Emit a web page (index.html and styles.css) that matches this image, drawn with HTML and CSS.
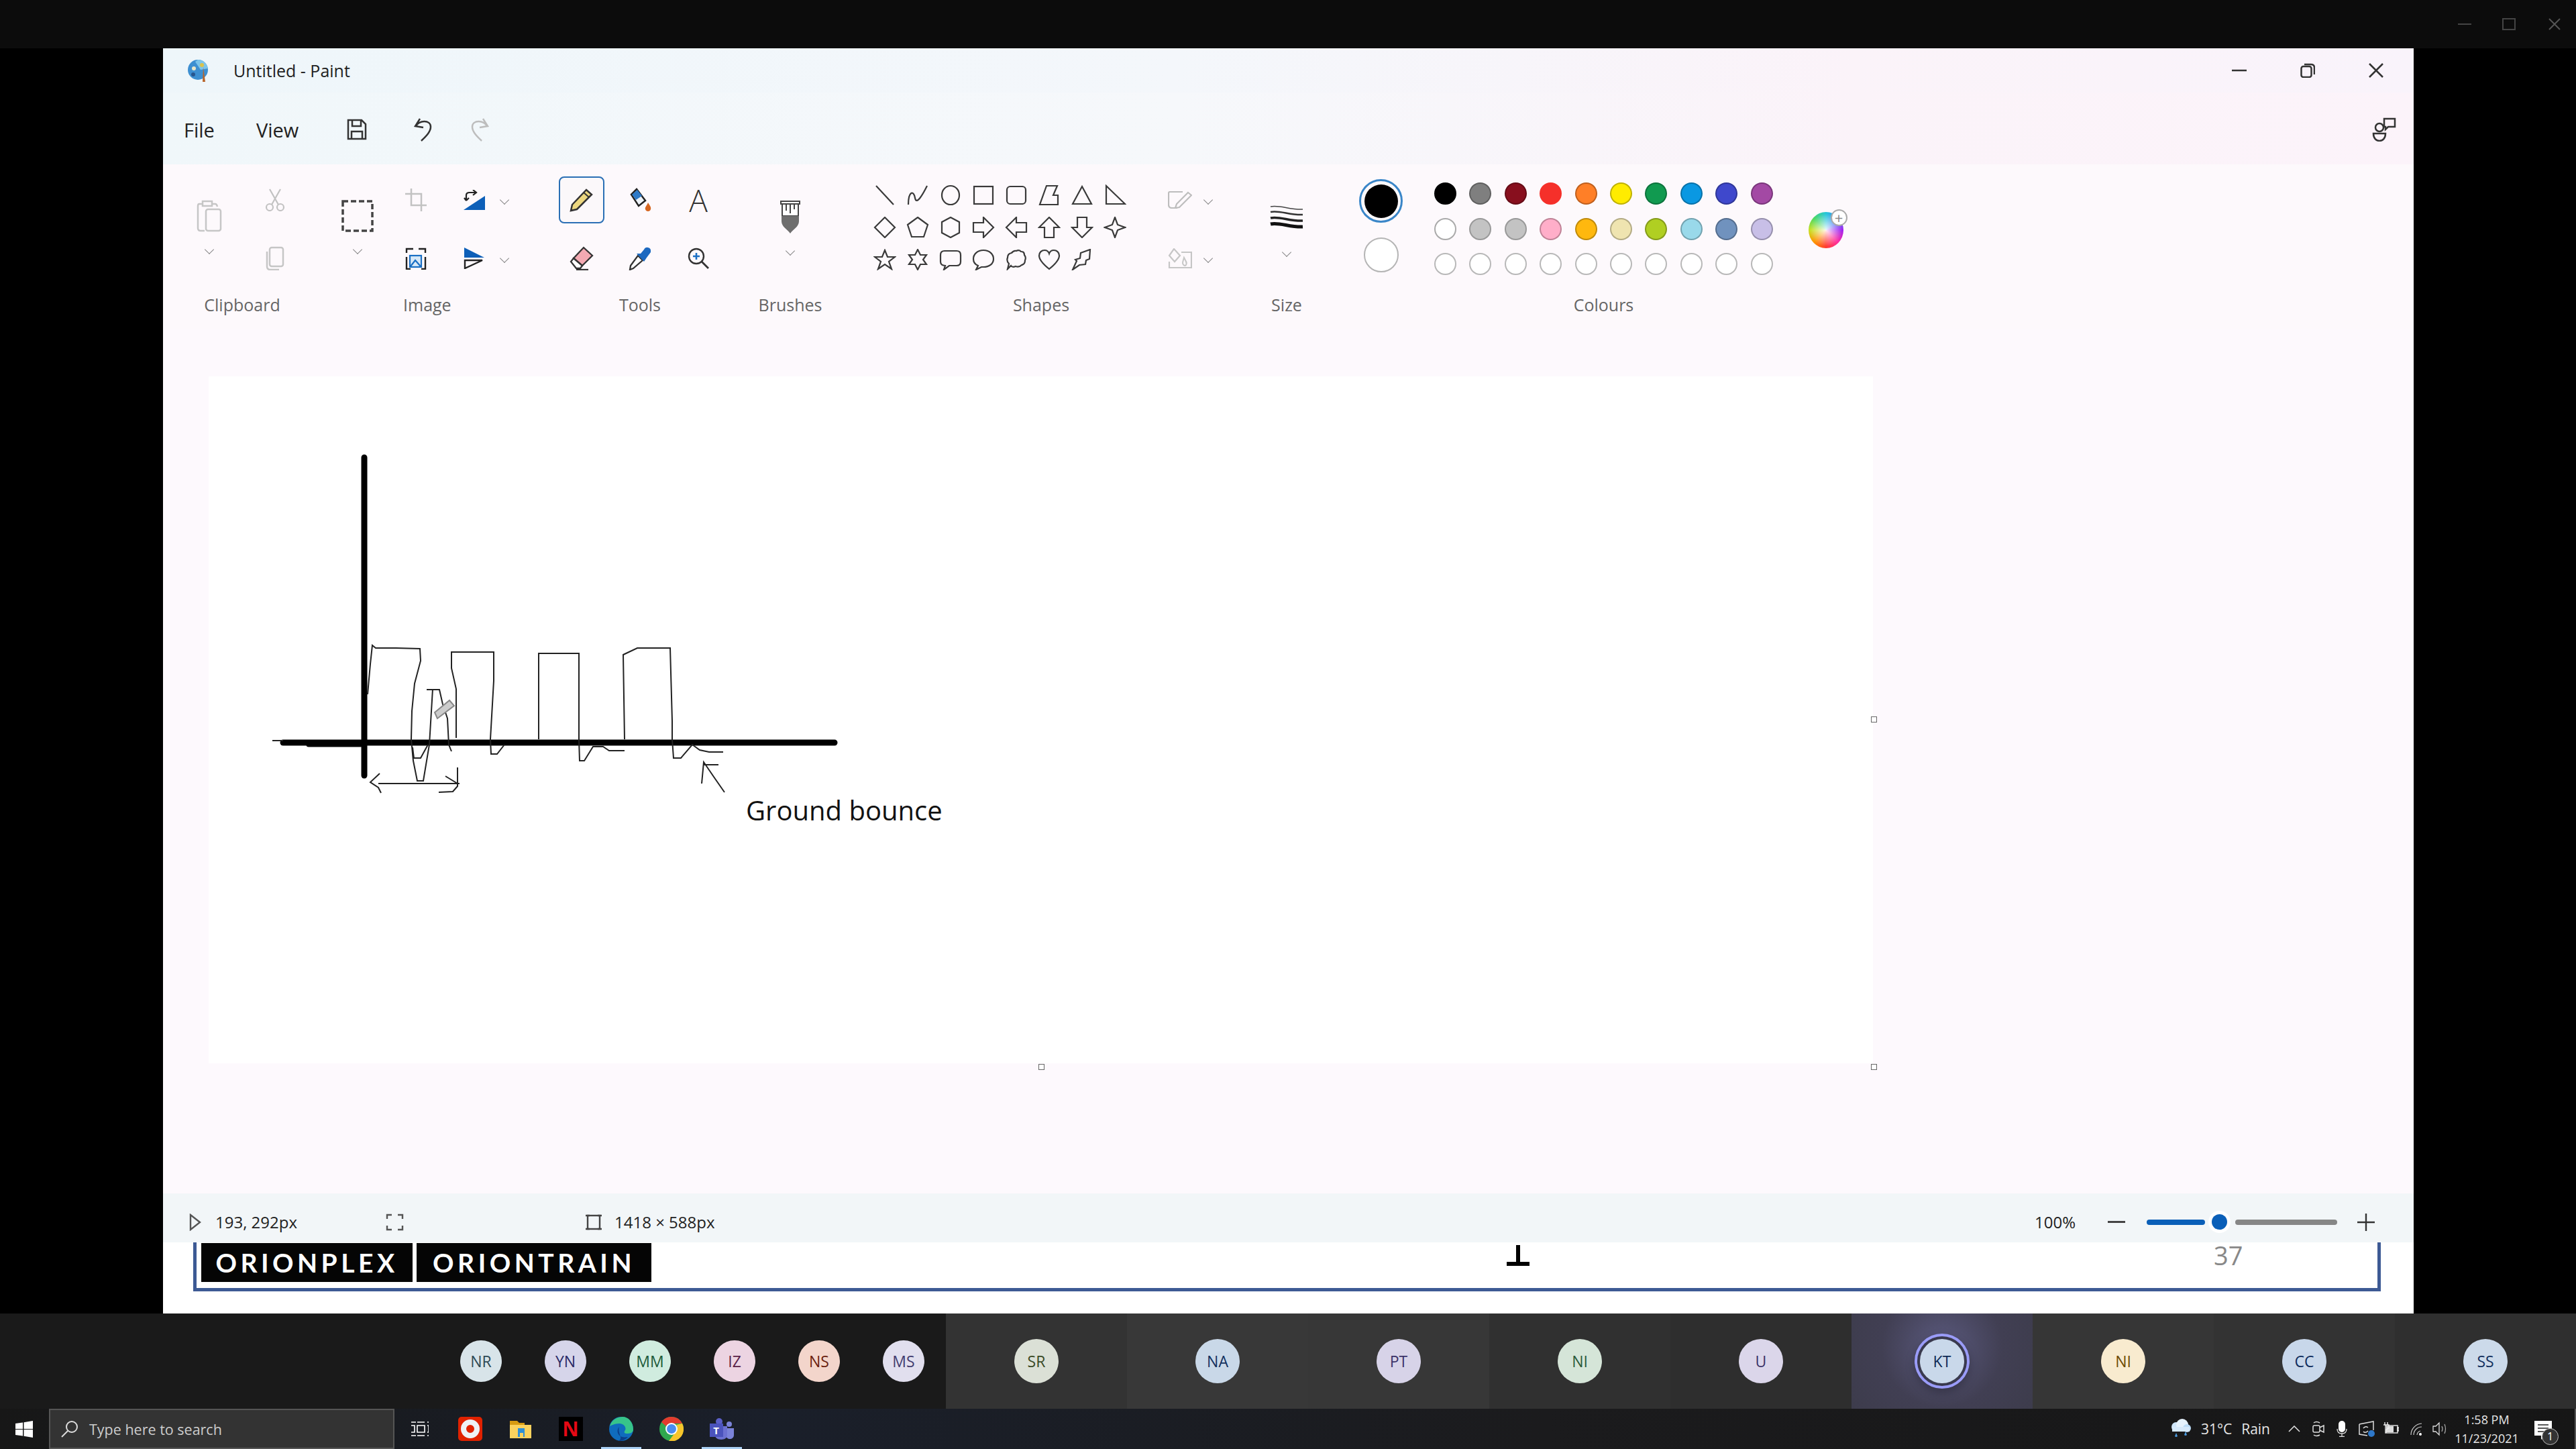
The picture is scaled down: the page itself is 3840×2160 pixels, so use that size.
FILE: index.html
```html
<!DOCTYPE html>
<html lang="en">
<head>
    <meta charset="UTF-8">
    <title>Untitled - Paint</title>
    <link rel="stylesheet" href="styles.css">
</head>
<body>
    <!-- Meeting window controls -->
    <div class="topbar">
        <span class="top-min"></span>
        <span class="top-max"></span>
        <svg class="top-close" width="20" height="20" viewBox="0 0 20 20"><path d="M2 2L18 18M18 2L2 18" stroke="#555" stroke-width="2"/></svg>
    </div>

    <div class="desktop">
        <div class="paint">
            <div class="titlebar">
                <svg class="app-icon" width="34" height="34" viewBox="0 0 34 34">
                    <circle cx="16" cy="16" r="15" fill="#3d8fd1"/>
                    <path d="M16 1A15 15 0 0 1 31 14L20 16L12 4z" fill="#7cc4ea"/>
                    <circle cx="10" cy="14" r="3" fill="#e9e6c8"/>
                    <circle cx="22" cy="9" r="3" fill="#d9c24a"/>
                    <circle cx="9" cy="23" r="3" fill="#27568f"/>
                    <path d="M24 12L27 34L23 34z" fill="#b8642a"/>
                </svg>
                <span class="title-text">Untitled - Paint</span>
                <div class="win-controls">
                    <svg width="22" height="4" viewBox="0 0 22 4"><path d="M0 2H22" stroke="#333" stroke-width="2.5"/></svg>
                    <svg width="22" height="22" viewBox="0 0 22 22"><rect x="1.5" y="5" width="15" height="16" rx="3" fill="none" stroke="#333" stroke-width="2.5"/><path d="M6 2H16Q21 2 21 7V17" fill="none" stroke="#333" stroke-width="2.5"/></svg>
                    <svg width="22" height="22" viewBox="0 0 22 22"><path d="M1 1L21 21M21 1L1 21" stroke="#333" stroke-width="2.5"/></svg>
                </div>
            </div>

            <div class="menubar">
                <span class="menu-file">File</span>
                <span class="menu-view">View</span>
                <svg class="menu-save" width="30" height="32" viewBox="0 0 30 32"><path d="M2 2H22L28 8V30H2zM8 2V11H21V2M7 30V19H23V30" fill="none" stroke="#333" stroke-width="2.5"/></svg>
                <svg class="menu-undo" width="30" height="36" viewBox="0 0 30 36"><path d="M5 13C9 4 27 3 27 14C27 22 19 29 13 35M11 2L4 13L16 15" fill="none" stroke="#333" stroke-width="2.5"/></svg>
                <svg class="menu-redo" width="30" height="36" viewBox="0 0 30 36"><path d="M25 13C21 4 3 3 3 14C3 22 11 29 17 35M19 2L26 13L14 15" fill="none" stroke="#bdbdbd" stroke-width="2.5"/></svg>
                <svg class="menu-share" width="36" height="36" viewBox="0 0 36 36">
                    <circle cx="11" cy="15" r="6" fill="none" stroke="#333" stroke-width="2.5"/>
                    <path d="M2 24H20C20 31 16 35 11 35C6 35 2 31 2 24z" fill="none" stroke="#333" stroke-width="2.5"/>
                    <path d="M18 2H34V14H24L20 18V14H18z" fill="none" stroke="#333" stroke-width="2.5"/>
                </svg>
            </div>

            <div class="ribbon">
                <!-- Clipboard -->
                <div class="group group-clipboard">
                    <div class="tools clipboard-tools">
                        <div class="tall-tool">
                            <svg width="38" height="48" viewBox="0 0 38 48"><path d="M8 6H4Q2 6 2 9V42Q2 46 6 46H12M24 6H28Q30 6 31 10M9 2H23V9H9z" fill="none" stroke="#c6c6c6" stroke-width="2.5"/><rect x="14" y="14" width="22" height="32" rx="3" fill="none" stroke="#c6c6c6" stroke-width="2.5"/></svg>
                            <span class="chev"></span>
                        </div>
                        <div class="tool">
                            <svg width="32" height="34" viewBox="0 0 32 34"><path d="M8 1L21 24M24 1L11 24" stroke="#c2c2c2" stroke-width="2.2"/><circle cx="8" cy="28" r="5" fill="none" stroke="#c2c2c2" stroke-width="2.2"/><circle cx="24" cy="28" r="5" fill="none" stroke="#c2c2c2" stroke-width="2.2"/></svg>
                        </div>
                        <div class="tool">
                            <svg width="28" height="36" viewBox="0 0 28 36"><rect x="6" y="2" width="20" height="28" rx="3" fill="none" stroke="#c6c6c6" stroke-width="2.5"/><path d="M2 8V30Q2 35 7 35H20" fill="none" stroke="#c6c6c6" stroke-width="2.5"/></svg>
                        </div>
                    </div>
                    <span class="group-label">Clipboard</span>
                </div>

                <!-- Image -->
                <div class="group group-image">
                    <div class="tools image-tools">
                        <div class="tall-tool select-tool">
                            <svg width="48" height="48" viewBox="0 0 48 48"><rect x="2" y="2" width="44" height="44" fill="none" stroke="#444" stroke-width="3.5" stroke-dasharray="8 4"/></svg>
                            <span class="chev"></span>
                        </div>
                        <div class="tool">
                            <svg width="32" height="34" viewBox="0 0 32 34"><path d="M9 0V25H32M0 8H24V34" fill="none" stroke="#c2c2c2" stroke-width="2.5"/></svg>
                        </div>
                        <div class="tool tool-split">
                            <svg width="32" height="30" viewBox="0 0 32 30"><path d="M0 30H32V9z" fill="#0d5fb8"/><path d="M4 15V8Q4 4 9 4H18M14 0L19 4L14 8M4 16L1 12M4 16L8 12" fill="none" stroke="#222" stroke-width="2.2"/></svg>
                            <span class="chev"></span>
                        </div>
                        <div class="tool">
                            <svg width="32" height="33" viewBox="0 0 32 33"><path d="M2 8V2H12M2 14V32H8M20 2H30V8M24 32H30V14" fill="none" stroke="#222" stroke-width="2.4"/><rect x="7" y="12" width="17" height="17" fill="#d8e8f7" stroke="#1a6fc4" stroke-width="2.2"/><path d="M8 28L15 19L23 28" fill="none" stroke="#1a6fc4" stroke-width="2.2"/></svg>
                        </div>
                        <div class="tool tool-split">
                            <svg width="32" height="32" viewBox="0 0 32 32"><path d="M1 0L31 15H1z" fill="#0d5fb8"/><path d="M2 19H28L2 31z" fill="none" stroke="#222" stroke-width="2.4"/></svg>
                            <span class="chev"></span>
                        </div>
                    </div>
                    <span class="group-label">Image</span>
                </div>

                <!-- Tools -->
                <div class="group group-tools">
                    <div class="tools tools-grid">
                        <div class="tool tool-active">
                            <svg width="36" height="36" viewBox="0 0 36 36"><path d="M25 3L33 10L11 32L2 34L4 25z" fill="#ecd77f" stroke="#333" stroke-width="2.5"/><path d="M21 7L29 14" stroke="#333" stroke-width="2"/></svg>
                        </div>
                        <div class="tool">
                            <svg width="36" height="36" viewBox="0 0 36 36"><path d="M5 10L13 2L26 19L16 27z" fill="#eef3f8" stroke="#222" stroke-width="2.5"/><path d="M6 10L14 3L21 12L12 18z" fill="#2e7ac8"/><path d="M30 22C33 27 35 29 34 32C33 36 27 36 26 32C25 29 28 27 30 22z" fill="#d6651f"/></svg>
                        </div>
                        <div class="tool tool-letter">A</div>
                        <div class="tool">
                            <svg width="36" height="36" viewBox="0 0 36 36"><path d="M21 2L34 14L19 29L6 18z" fill="#f3a9b2" stroke="#333" stroke-width="2.3"/><path d="M6 18L2 23L10 33H16L19 29z" fill="#fff" stroke="#333" stroke-width="2.3"/><path d="M10 35H28" stroke="#333" stroke-width="2.3"/></svg>
                        </div>
                        <div class="tool">
                            <svg width="36" height="36" viewBox="0 0 36 36"><path d="M15 14L22 21L8 33L3 35L4 29z" fill="#fff" stroke="#333" stroke-width="2.3"/><path d="M13 11L24 23L28 17L34 9Q35 3 30 2Q26 1 24 5L19 11z" fill="#1d69c0"/></svg>
                        </div>
                        <div class="tool">
                            <svg width="32" height="32" viewBox="0 0 32 32"><circle cx="13" cy="13" r="11" fill="none" stroke="#333" stroke-width="2.4"/><path d="M21 21L31 31" stroke="#333" stroke-width="2.8"/><path d="M13 8V18M8 13H18" stroke="#1a6fc4" stroke-width="2.6"/></svg>
                        </div>
                    </div>
                    <span class="group-label">Tools</span>
                </div>

                <!-- Brushes -->
                <div class="group group-brushes">
                    <div class="tools">
                        <div class="tall-tool">
                            <svg width="32" height="50" viewBox="0 0 32 50"><path d="M2 2H30V6H2zM4 6H28V24H4z" fill="#fff" stroke="#444" stroke-width="2"/><path d="M10 7V16M16 7V20M22 7V14" stroke="#444" stroke-width="2"/><path d="M3 24H29V32C29 40 20 44 16 50C12 44 3 40 3 32z" fill="#6e6e6e"/></svg>
                            <span class="chev"></span>
                        </div>
                    </div>
                    <span class="group-label">Brushes</span>
                </div>

                <!-- Shapes -->
                <div class="group group-shapes">
                    <div class="tools shapes-tools">
                        <div class="shapes-grid">
                            <svg class="shape" viewBox="0 0 32 32"><path d="M3 2L29 30"/></svg>
                            <svg class="shape" viewBox="0 0 32 32"><path d="M2 30C2 10 10 8 12 20C14 32 24 14 30 2"/></svg>
                            <svg class="shape" viewBox="0 0 32 32"><ellipse cx="16" cy="16" rx="13" ry="14"/></svg>
                            <svg class="shape" viewBox="0 0 32 32"><rect x="2" y="3" width="28" height="26"/></svg>
                            <svg class="shape" viewBox="0 0 32 32"><rect x="2" y="3" width="28" height="26" rx="5"/></svg>
                            <svg class="shape" viewBox="0 0 32 32"><path d="M12 2H28L22 16H29V30H2z"/></svg>
                            <svg class="shape" viewBox="0 0 32 32"><path d="M16 3L30 29H2z"/></svg>
                            <svg class="shape" viewBox="0 0 32 32"><path d="M3 2L31 29H3z"/></svg>
                            <svg class="shape" viewBox="0 0 32 32"><path d="M16 1L31 16L16 31L1 16z"/></svg>
                            <svg class="shape" viewBox="0 0 32 32"><path d="M16 1L31 12L25 30H7L1 12z"/></svg>
                            <svg class="shape" viewBox="0 0 32 32"><path d="M16 1L29 8V24L16 31L3 24V8z"/></svg>
                            <svg class="shape" viewBox="0 0 32 32"><path d="M1 9H16V1L31 16L16 31V23H1z"/></svg>
                            <svg class="shape" viewBox="0 0 32 32"><path d="M31 9H16V1L1 16L16 31V23H31z"/></svg>
                            <svg class="shape" viewBox="0 0 32 32"><path d="M9 31V16H1L16 1L31 16H23V31z"/></svg>
                            <svg class="shape" viewBox="0 0 32 32"><path d="M9 1V16H1L16 31L31 16H23V1z"/></svg>
                            <svg class="shape" viewBox="0 0 32 32"><path d="M16 1L20 12L31 16L20 20L16 31L12 20L1 16L12 12z"/></svg>
                            <svg class="shape" viewBox="0 0 32 32"><path d="M16 2L20 12L31 12L22 19L26 30L16 23L6 30L10 19L1 12L12 12z"/></svg>
                            <svg class="shape" viewBox="0 0 32 32"><path d="M16 1L20 9L29 9L24 16L29 23L20 23L16 31L12 23L3 23L8 16L3 9L12 9z"/></svg>
                            <svg class="shape" viewBox="0 0 32 32"><path d="M7 3H25Q31 3 31 9V19Q31 25 25 25H14L6 31L8 25Q1 25 1 19V9Q1 3 7 3z"/></svg>
                            <svg class="shape" viewBox="0 0 32 32"><path d="M16 2C25 2 31 8 31 15C31 22 25 27 16 27H13L5 31L8 25C3 23 1 19 1 15C1 8 7 2 16 2z"/></svg>
                            <svg class="shape" viewBox="0 0 32 32"><path d="M16 3Q20 1 23 4Q28 4 28 9Q31 13 29 17Q29 23 24 24Q20 28 15 26Q10 28 8 25L3 30L5 22Q1 18 3 13Q3 7 9 6Q12 2 16 3z"/></svg>
                            <svg class="shape" viewBox="0 0 32 32"><path d="M16 30C6 22 1 16 1 10C1 5 5 2 9 2C12 2 15 4 16 7C17 4 20 2 23 2C27 2 31 5 31 10C31 16 26 22 16 30z"/></svg>
                            <svg class="shape" viewBox="0 0 32 32"><path d="M14 6L28 1L27 15L22 17L21 23L12 24L2 31L8 18L6 16L13 14z"/></svg>
                        </div>
                        <div class="shape-styles">
                            <div class="tool tool-split">
                                <svg width="36" height="26" viewBox="0 0 36 26"><path d="M22 1H3Q1 1 1 3V20Q1 25 6 25H14" fill="none" stroke="#bdbdbd" stroke-width="2.2"/><path d="M30 2L35 6L17 24L11 25L13 19z" fill="none" stroke="#bdbdbd" stroke-width="2.2"/></svg>
                                <span class="chev"></span>
                            </div>
                            <div class="tool tool-split">
                                <svg width="36" height="30" viewBox="0 0 36 30"><path d="M20 6H35V29H2V20" fill="none" stroke="#c6c6c6" stroke-width="2.2"/><path d="M9 1L18 11L10 20L2 11z" fill="none" stroke="#c6c6c6" stroke-width="2.2"/><path d="M24 14C27 20 29 22 27 25C25 27 22 25 22 22C22 20 23 18 24 14z" fill="none" stroke="#c6c6c6" stroke-width="2"/></svg>
                                <span class="chev"></span>
                            </div>
                        </div>
                    </div>
                    <span class="group-label">Shapes</span>
                </div>

                <!-- Size -->
                <div class="group group-size">
                    <div class="tools">
                        <div class="tall-tool size-tool">
                            <svg width="50" height="38" viewBox="0 0 50 38"><path d="M1 3C14 0 30 8 49 7" fill="none" stroke="#444" stroke-width="1.5"/><path d="M1 11C14 8 30 16 49 15" fill="none" stroke="#333" stroke-width="2.5"/><path d="M1 20C14 17 30 25 49 24" fill="none" stroke="#222" stroke-width="3.5"/><path d="M1 29C14 26 30 34 49 33" fill="none" stroke="#111" stroke-width="5"/></svg>
                            <span class="chev"></span>
                        </div>
                    </div>
                    <span class="group-label">Size</span>
                </div>

                <!-- Colours -->
                <div class="group group-colours">
                    <div class="tools colours-tools">
                        <div class="active-colours">
                            <div class="current-colour"><span></span></div>
                            <div class="second-colour"></div>
                        </div>
                        <div class="palette">
                            <span class="swatch c-black"></span>
                            <span class="swatch c-gray"></span>
                            <span class="swatch c-maroon"></span>
                            <span class="swatch c-red"></span>
                            <span class="swatch c-orange"></span>
                            <span class="swatch c-yellow"></span>
                            <span class="swatch c-green"></span>
                            <span class="swatch c-blue"></span>
                            <span class="swatch c-indigo"></span>
                            <span class="swatch c-purple"></span>
                            <span class="swatch c-white"></span>
                            <span class="swatch c-silver"></span>
                            <span class="swatch c-silver"></span>
                            <span class="swatch c-pink"></span>
                            <span class="swatch c-gold"></span>
                            <span class="swatch c-cream"></span>
                            <span class="swatch c-lime"></span>
                            <span class="swatch c-sky"></span>
                            <span class="swatch c-steel"></span>
                            <span class="swatch c-lavender"></span>
                            <span class="swatch empty"></span>
                            <span class="swatch empty"></span>
                            <span class="swatch empty"></span>
                            <span class="swatch empty"></span>
                            <span class="swatch empty"></span>
                            <span class="swatch empty"></span>
                            <span class="swatch empty"></span>
                            <span class="swatch empty"></span>
                            <span class="swatch empty"></span>
                            <span class="swatch empty"></span>
                        </div>
                        <div class="colour-wheel">
                            <span class="wheel-plus">+</span>
                        </div>
                    </div>
                    <span class="group-label">Colours</span>
                </div>
            </div>

            <div class="workspace">
                <div class="canvas">
                    <svg class="drawing" width="2481" height="1024" viewBox="311 561 2481 1024">
                        <g class="thick">
                            <path d="M543 682V1156"/>
                            <path d="M422 1107H1244"/>
                            <path d="M460 1110H538" stroke-width="7"/>
                        </g>
                        <g class="thin">
                            <path d="M406 1104H422"/>
                            <path d="M548 1035L552 990L555 962L560 966H590L626 967L627 985L618 1019L614 1060L613 1102L616 1134L622 1164H631L640 1110L645 1027"/>
                            <path d="M636 1028H655L660 1050L667 1071L669 1110L673 1120"/>
                            <path d="M615 1114L617 1130H627L638 1110"/>
                            <path d="M680 1100V1027L673 996V972H736V1015L731 1102L732 1124H741L752 1110"/>
                            <path d="M803 1102V974H863V1102L864 1134H871L884 1113H899L908 1119H931"/>
                            <path d="M931 1102L929 976L950 966H999L1002 1075V1102L1004 1130H1015L1032 1110L1043 1118L1057 1121H1078"/>
                            <path d="M1046 1168L1049 1136L1064 1158L1080 1181M1049 1140H1071"/>
                            <path d="M566 1153L552 1166L564 1174L568 1182"/>
                            <path d="M564 1168H685M682 1144V1172L675 1180L654 1181M664 1157L682 1168"/>
                        </g>
                        <path class="pencil-cursor" d="M652 1071L648 1062L670 1044L677 1052z"/>
                        <text class="drawing-text" x="1112" y="1223">Ground bounce</text>
                    </svg>
                    <span class="handle handle-right"></span>
                    <span class="handle handle-bottom"></span>
                    <span class="handle handle-corner"></span>
                </div>
            </div>

            <div class="statusbar">
                <svg class="status-pointer" width="18" height="26" viewBox="0 0 18 26"><path d="M2 2L16 13L2 24z" fill="none" stroke="#555" stroke-width="2.4"/></svg>
                <span class="status-pos">193, 292px</span>
                <svg class="status-select" width="27" height="26" viewBox="0 0 27 26"><path d="M2 8V2H9M18 2H25V8M2 18V24H9M18 24H25V18" fill="none" stroke="#555" stroke-width="2.4"/></svg>
                <svg class="status-canvas" width="24" height="26" viewBox="0 0 24 26"><rect x="3" y="3" width="18" height="20" fill="none" stroke="#444" stroke-width="2.4"/><path d="M0 3H6M18 3H24M0 23H6M18 23H24" stroke="#444" stroke-width="2.4"/></svg>
                <span class="status-size">1418 × 588px</span>
                <span class="status-zoom">100%</span>
                <span class="zoom-minus"></span>
                <div class="zoom-slider">
                    <span class="zoom-fill"></span>
                    <span class="zoom-thumb"></span>
                    <span class="zoom-track"></span>
                </div>
                <svg class="zoom-plus" width="26" height="26" viewBox="0 0 26 26"><path d="M0 13H26M13 0V26" stroke="#333" stroke-width="2.4"/></svg>
            </div>

            <!-- Bottom of the slide showing behind the Paint window -->
            <div class="slide">
                <div class="slide-frame">
                    <div class="logo">
                        <span class="logo-box logo-plex">ORIONPLEX</span>
                        <span class="logo-box logo-train">ORIONTRAIN</span>
                    </div>
                    <span class="slide-mark"></span>
                    <span class="slide-number">37</span>
                </div>
            </div>
        </div>
    </div>

    <!-- Participants -->
    <div class="participants">
        <div class="people-row">
            <span class="avatar small a-nr">NR</span>
            <span class="avatar small a-yn">YN</span>
            <span class="avatar small a-mm">MM</span>
            <span class="avatar small a-iz">IZ</span>
            <span class="avatar small a-ns">NS</span>
            <span class="avatar small a-ms">MS</span>
        </div>
        <div class="tile tile-1"><span class="avatar a-sr">SR</span></div>
        <div class="tile tile-2"><span class="avatar a-na">NA</span></div>
        <div class="tile tile-3"><span class="avatar a-pt">PT</span></div>
        <div class="tile tile-4"><span class="avatar a-ni">NI</span></div>
        <div class="tile tile-5"><span class="avatar a-u">U</span></div>
        <div class="tile tile-speaking"><span class="avatar a-kt">KT</span></div>
        <div class="tile tile-7"><span class="avatar a-ni2">NI</span></div>
        <div class="tile tile-8"><span class="avatar a-cc">CC</span></div>
        <div class="tile tile-9"><span class="avatar a-ss">SS</span></div>
    </div>

    <!-- Windows taskbar -->
    <div class="taskbar">
        <div class="start">
            <svg width="26" height="25" viewBox="0 0 26 25"><path d="M0 4L11 2.4V12H0zM12.500 2.200L26 0V12H12.500zM0 13H11V22.600L0 21zM12.500 13H26V25L12.500 22.800z" fill="#fff"/></svg>
        </div>
        <div class="search">
            <svg width="26" height="26" viewBox="0 0 26 26"><circle cx="16" cy="10" r="8" fill="none" stroke="#ddd" stroke-width="2"/><path d="M10 16L1 25" stroke="#ddd" stroke-width="2"/></svg>
            <span>Type here to search</span>
        </div>
        <div class="task-item">
            <svg width="26" height="24" viewBox="0 0 26 24"><path d="M0 2H7M0 22H7M0 7H5V17H0M9 7H20V17H9zM9 2H20M9 22H20M24 2H26M24 7H26V17H24M24 22H26" fill="none" stroke="#fff" stroke-width="1.6"/></svg>
        </div>
        <div class="task-item">
            <svg width="36" height="36" viewBox="0 0 36 36"><rect width="36" height="36" rx="5" fill="#e02200"/><circle cx="18" cy="18" r="10" fill="none" stroke="#eef2f6" stroke-width="8"/></svg>
        </div>
        <div class="task-item">
            <svg width="32" height="28" viewBox="0 0 32 28"><path d="M0 2H11L14 5H22V10H0z" fill="#d79b12"/><path d="M0 8H32V28H0z" fill="#fbd25e"/><path d="M12 13H22V26H12z" fill="#2f8fd6"/><path d="M15 20H20V26H15z" fill="#fbd25e"/></svg>
        </div>
        <div class="task-item"><span class="netflix">N</span></div>
        <div class="task-item running">
            <svg width="36" height="36" viewBox="0 0 36 36">
                <circle cx="18" cy="18" r="18" fill="#0f6cbd"/>
                <path d="M1 14C4 3 14 0 20 0C29 0 36 8 36 19C36 24 31 25 26 25C22 25 22 22 24 20C26 16 22 10 15 10C8 10 3 13 1 14z" fill="#37c48a"/>
                <path d="M15 15C10 20 12 33 28 30C24 35 18 36 14 36C22 32 12 25 15 15z" fill="#0b3f8a"/>
            </svg>
        </div>
        <div class="task-item">
            <svg width="36" height="36" viewBox="0 0 36 36">
                <circle cx="18" cy="18" r="18" fill="#2fa84f"/>
                <path d="M18 0A18 18 0 0 1 34 10H18A8 8 0 0 0 10 14L3 8A18 18 0 0 1 18 0z" fill="#e33b2e"/>
                <path d="M34 10A18 18 0 0 1 14 36L23 24A8 8 0 0 0 25 12z" fill="#f7c52b"/>
                <circle cx="18" cy="18" r="9" fill="#fff"/>
                <circle cx="18" cy="18" r="7" fill="#4a8cf0"/>
            </svg>
        </div>
        <div class="task-item running">
            <div class="teams">
                <svg class="teams-people" width="36" height="32" viewBox="0 0 36 32"><circle cx="14" cy="5" r="5" fill="#5b5fc7"/><circle cx="29" cy="9" r="4" fill="#7b83d9"/><path d="M24 15H36V25C36 29 33 31 30 31C27 31 24 29 24 25z" fill="#7b83d9"/><path d="M8 12H26V26C26 29 22 32 17 32C12 32 8 29 8 26z" fill="#6c71d1"/></svg>
                <span class="teams-t">T</span>
            </div>
        </div>

        <div class="tray">
            <svg class="tray-cloud" width="32" height="30" viewBox="0 0 32 30"><circle cx="10" cy="12" r="7" fill="#cfe6fb"/><circle cx="19" cy="9" r="9" fill="#e6f2fd"/><circle cx="26" cy="14" r="6" fill="#bcdcf7"/><path d="M4 12H30V19H4z" fill="#d6e9fb"/><path d="M10 21L12 26A2.500 2.500 0 0 1 8 26zM24 19L26 24A2.500 2.500 0 0 1 22 24z" fill="#4a9be0"/></svg>
            <span class="weather-temp">31°C</span>
            <span class="weather-text">Rain</span>
            <svg class="tray-chevron" width="18" height="10" viewBox="0 0 18 10"><path d="M1 9L9 1L17 9" fill="none" stroke="#ddd" stroke-width="1.6"/></svg>
            <svg class="tray-icon" width="20" height="24" viewBox="0 0 20 24"><rect x="2" y="7" width="10" height="10" rx="2" fill="none" stroke="#ddd" stroke-width="1.5"/><path d="M12 10L18 7V17L12 14M3 3Q7 0 12 3M3 21Q7 24 12 21" fill="none" stroke="#ddd" stroke-width="1.500"/></svg>
            <svg class="tray-icon" width="16" height="24" viewBox="0 0 16 24"><rect x="3" y="0" width="10" height="17" rx="5" fill="#fff"/><path d="M1 12Q1 19 8 19Q15 19 15 12M8 19V23M4 23.500H12" fill="none" stroke="#ddd" stroke-width="1.3"/></svg>
            <svg class="tray-icon" width="24" height="24" viewBox="0 0 24 24"><path d="M1 5L22 1V14M1 5V20L13 22" fill="none" stroke="#ddd" stroke-width="1.500"/><path d="M7 11Q10 7 14 10M7 16Q10 19 14 15" fill="none" stroke="#ddd" stroke-width="1.500"/><circle cx="19" cy="19" r="5" fill="#2e78c9"/></svg>
            <svg class="tray-battery" width="24" height="20" viewBox="0 0 24 20"><rect x="4" y="5" width="18" height="11" fill="none" stroke="#ddd" stroke-width="1.500"/><rect x="5" y="6" width="11" height="9" fill="#ddd"/><path d="M22 8H24V13H22zM3 0V4M7 0V4M1 4H9V9L5 11V16" fill="none" stroke="#eee" stroke-width="1.400"/></svg>
            <svg class="tray-icon" width="18" height="20" viewBox="0 0 18 20"><path d="M1 19A17 17 0 0 1 17 2M5 19A12 12 0 0 1 17 7M10 19A7 7 0 0 1 15 13" fill="none" stroke="#ccc" stroke-width="1.200"/><circle cx="15" cy="18" r="2" fill="#fff"/></svg>
            <svg class="tray-speaker" width="22" height="22" viewBox="0 0 22 22"><path d="M1 7H5L10 2V20L5 15H1z" fill="none" stroke="#ddd" stroke-width="1.300"/><path d="M14 7Q16 11 14 15M18 4Q21 11 18 18" fill="none" stroke="#aaa" stroke-width="1.200"/></svg>
            <div class="clock">
                <span>1:58 PM</span>
                <span>11/23/2021</span>
            </div>
            <div class="notify">
                <svg width="26" height="28" viewBox="0 0 26 28"><path d="M0 0H26V22H16L10 28V22H0z" fill="#fff"/><path d="M5 6H21M5 11H21M5 16H21" stroke="#222" stroke-width="1.500"/></svg>
                <span class="notify-count">1</span>
            </div>
        </div>
    </div>
</body>
</html>
```

FILE: styles.css
```css
* {
    margin: 0;
    padding: 0;
    box-sizing: border-box;
    font-family: "Open Sans", "Noto Sans", sans-serif;
}

body {
    width: 3840px;
    height: 2160px;
    background-color: #000;
    display: flex;
    flex-direction: column;
    overflow: hidden;
}

svg {
    display: block;
    flex-shrink: 0;
}

/* Meeting bar */
.topbar {
    height: 72px;
    background-color: #0c0c0c;
    display: flex;
    align-items: center;
    justify-content: flex-end;
    padding-right: 22px;
    flex-shrink: 0;
}

.top-min {
    width: 20px;
    height: 2px;
    background-color: #444;
}

.top-max {
    width: 20px;
    height: 18px;
    border: 2px solid #444;
    margin: 0 48px 0 46px;
}

/* Paint window */
.desktop {
    height: 1886px;
    padding-left: 243px;
    padding-right: 242px;
    flex-shrink: 0;
}

.paint {
    height: 100%;
    display: flex;
    flex-direction: column;
    background-color: #fdf9fc;
}

.titlebar {
    height: 66px;
    display: flex;
    align-items: center;
    padding-left: 36px;
    padding-right: 45px;
    background: linear-gradient(95deg, #eef6fa 0%, #f4f7fb 45%, #fbf3f9 75%, #f9f3fb 100%);
}

.title-text {
    margin-left: 35px;
    font-size: 25px;
    color: #222;
}

.win-controls {
    margin-left: auto;
    display: flex;
    align-items: center;
    gap: 80px;
}

.menubar {
    height: 107px;
    display: flex;
    align-items: center;
    padding-left: 31px;
    padding-top: 3px;
    color: #222;
    font-size: 29px;
    background: linear-gradient(95deg, #f0f7fa 0%, #f6f8fb 45%, #fbf3f9 75%, #fcf3fa 100%);
}

.menu-view {
    margin-left: 62px;
}

.menu-save {
    margin-left: 72px;
}

.menu-undo {
    margin-left: 68px;
}

.menu-redo {
    margin-left: 56px;
}

.menu-share {
    margin-left: auto;
    margin-right: 26px;
}

/* Ribbon */
.ribbon {
    height: 245px;
    display: flex;
    padding-left: 37px;
    padding-top: 18px;
    background-color: #fdf9fc;
    flex-shrink: 0;
}

.group {
    display: flex;
    flex-direction: column;
}

.tools {
    height: 157px;
}

.group-label {
    margin-top: 17px;
    font-size: 25px;
    line-height: 34px;
    color: #666;
    text-align: center;
}

.tool {
    display: flex;
    align-items: center;
    justify-content: center;
}

.tall-tool {
    display: flex;
    flex-direction: column;
    align-items: center;
    padding-top: 35px;
    gap: 21px;
}

.chev {
    width: 10px;
    height: 10px;
    border-right: 1.500px solid #888;
    border-bottom: 1.500px solid #888;
    transform: rotate(45deg);
    flex-shrink: 0;
}

.group-clipboard {
    width: 162px;
}

.clipboard-tools {
    display: grid;
    grid-template-columns: 64px 64px;
    grid-template-rows: 70px 70px;
    column-gap: 34px;
    row-gap: 17px;
}

.clipboard-tools .tall-tool {
    grid-row: span 2;
}

.group-image {
    width: 190px;
    margin-left: 144px;
}

.group-image .group-label {
    text-align: left;
    margin-left: 15px;
}

.image-tools {
    display: grid;
    grid-template-columns: 77px 68px 122px;
    grid-template-rows: 70px 70px;
    row-gap: 17px;
    margin-left: -77px;
    width: 267px;
}

.select-tool {
    grid-row: span 2;
    padding-right: 29px;
}

.tool-split {
    justify-content: flex-start;
    padding-left: 20px;
    gap: 19px;
}

.image-tools .tool-split {
    padding-left: 37px;
    gap: 24px;
}

.group-tools {
    width: 242px;
    margin-left: 57px;
}

.tools-grid {
    display: grid;
    grid-template-columns: repeat(3, 68px);
    grid-template-rows: 70px 70px;
    column-gap: 19px;
    row-gap: 17px;
}

.tool-active {
    border: 2px solid #2a6fb5;
    border-radius: 8px;
    background-color: #fbf8fa;
}

.tool-letter {
    font-size: 46px;
    font-weight: 300;
    color: #333;
}

.group-brushes {
    width: 100px;
    margin-left: 53px;
}

/* Shapes */
.group-shapes {
    width: 506px;
    margin-left: 71px;
}

.shapes-tools {
    display: flex;
}

.shapes-grid {
    display: grid;
    grid-template-columns: repeat(8, 40px);
    grid-auto-rows: 34px;
    column-gap: 9px;
    row-gap: 14px;
    padding-top: 12px;
}

.shape {
    width: 34px;
    height: 32px;
    justify-self: center;
    fill: none;
    stroke: #3a3a3a;
    stroke-width: 2.2;
}

.shape-styles {
    margin-left: 39px;
    display: grid;
    grid-template-rows: 70px 70px;
    row-gap: 17px;
    height: 157px;
}

.group-size {
    width: 80px;
    margin-left: 73px;
}

.size-tool {
    padding-top: 42px;
    gap: 28px;
}

/* Colours */
.group-colours {
    width: 729px;
    margin-left: 68px;
}

.colours-tools {
    display: flex;
}

.active-colours {
    width: 65px;
    padding-top: 4px;
}

.current-colour {
    width: 65px;
    height: 65px;
    border: 3px solid #3a86c8;
    border-radius: 50%;
    display: flex;
    align-items: center;
    justify-content: center;
}

.current-colour span {
    width: 50px;
    height: 50px;
    border-radius: 50%;
    background-color: #000;
}

.second-colour {
    width: 52px;
    height: 52px;
    margin: 22px auto 0;
    border: 2px solid #b5b5b5;
    border-radius: 50%;
    background-color: #fff;
}

.palette {
    margin-left: 47px;
    padding-top: 9px;
    display: grid;
    grid-template-columns: repeat(10, 33px);
    grid-auto-rows: 33px;
    column-gap: 19.400px;
    row-gap: 19.500px;
}

.swatch {
    width: 33px;
    height: 33px;
    border-radius: 50%;
    border: 2px solid rgba(0, 0, 0, 0.25);
}

.empty {
    background-color: #fff;
    border-color: #b8b8b8;
}

.c-black { background-color: #000; border-color: #000; }
.c-gray { background-color: #7f7f7f; }
.c-maroon { background-color: #880f1e; }
.c-red { background-color: #f5302a; border-color: #f5302a; }
.c-orange { background-color: #ff7f27; }
.c-yellow { background-color: #ffec00; }
.c-green { background-color: #119a50; }
.c-blue { background-color: #0a98e2; }
.c-indigo { background-color: #3f48cc; }
.c-purple { background-color: #a349a4; }
.c-white { background-color: #fff; border-color: #aaa; }
.c-silver { background-color: #c3c3c3; border-color: #999; }
.c-pink { background-color: #ffaec9; }
.c-gold { background-color: #ffb80e; }
.c-cream { background-color: #efe4b0; }
.c-lime { background-color: #b0cf22; }
.c-sky { background-color: #99d9ea; }
.c-steel { background-color: #7092be; }
.c-lavender { background-color: #c8bfe7; }

.colour-wheel {
    position: relative;
    width: 52px;
    height: 54px;
    margin-left: 53px;
    margin-top: 53px;
    border-radius: 50%;
    background: radial-gradient(circle, rgba(255, 255, 255, 0.9) 0%, rgba(255, 255, 255, 0) 65%),
        conic-gradient(#26c6da, #4287f5, #a020f0, #ff2fa0, #ff3b30, #ff9500, #c8e020, #4cd964, #26c6da);
}

.wheel-plus {
    position: absolute;
    top: -4px;
    right: -6px;
    width: 25px;
    height: 25px;
    border-radius: 50%;
    border: 2px solid #aaa;
    background-color: #fff;
    color: #888;
    font-size: 22px;
    line-height: 20px;
    text-align: center;
}

/* Canvas area */
.workspace {
    flex: 1;
    padding-left: 68px;
    padding-top: 71px;
    background-color: #fdf9fd;
}

.canvas {
    position: relative;
    width: 2481px;
    height: 1024px;
    background-color: #fff;
}

.thick {
    fill: none;
    stroke: #000;
    stroke-width: 9;
    stroke-linecap: round;
}

.thin {
    fill: none;
    stroke: #222;
    stroke-width: 2;
}

.pencil-cursor {
    fill: #ccc;
    stroke: #888;
    stroke-width: 2;
}

.drawing-text {
    font-size: 40px;
    fill: #111;
}

.handle {
    position: absolute;
    width: 9px;
    height: 9px;
    background-color: #fff;
    border: 1.500px solid #666;
}

.handle-right {
    right: -6px;
    top: 507px;
}

.handle-bottom {
    left: 1237px;
    bottom: -10px;
}

.handle-corner {
    right: -6px;
    bottom: -10px;
}

/* Status bar */
.statusbar {
    height: 73px;
    display: flex;
    align-items: center;
    padding-left: 39px;
    padding-top: 12px;
    font-size: 24px;
    color: #222;
    background-color: #f2f6f8;
    flex-shrink: 0;
}

.status-pos {
    margin-left: 21px;
    width: 129px;
}

.status-select {
    margin-left: 125px;
}

.status-canvas {
    margin-left: 271px;
}

.status-size {
    margin-left: 19px;
    width: 152px;
    white-space: nowrap;
}

.status-zoom {
    margin-left: 1965px;
    width: 61px;
}

.zoom-minus {
    width: 26px;
    height: 2.500px;
    margin-left: 48px;
    background-color: #444;
}

.zoom-slider {
    display: flex;
    align-items: center;
    margin-left: 32px;
}

.zoom-fill {
    width: 87px;
    height: 8px;
    border-radius: 4px;
    background-color: #0a5fb8;
}

.zoom-thumb {
    width: 23px;
    height: 23px;
    margin-left: 10px;
    margin-right: 12px;
    border-radius: 50%;
    background-color: #0a5fb8;
    box-shadow: 0 0 0 5px #fff;
}

.zoom-track {
    width: 152px;
    height: 8px;
    border-radius: 4px;
    background-color: #868686;
}

.zoom-plus {
    margin-left: 30px;
}

/* Slide behind the window */
.slide {
    height: 106px;
    background-color: #fff;
    padding-left: 45px;
    padding-right: 49px;
    flex-shrink: 0;
}

.slide-frame {
    height: 73px;
    display: flex;
    align-items: flex-start;
    border-left: 5px solid #3d5a94;
    border-right: 5px solid #3d5a94;
    border-bottom: 5px solid #3d5a94;
    padding-left: 7px;
}

.logo {
    display: flex;
    gap: 6px;
    padding-top: 1px;
}

.logo-box {
    height: 58px;
    background-color: #050505;
    color: #fff;
    font-family: "Lato", sans-serif;
    font-size: 39px;
    font-weight: 700;
    line-height: 58px;
    letter-spacing: 5.500px;
    text-align: center;
}

.logo-plex {
    width: 315px;
}

.logo-train {
    width: 350px;
}

.slide-mark {
    position: relative;
    width: 34px;
    height: 35px;
    margin-left: 1275px;
}

.slide-mark::before {
    content: "";
    position: absolute;
    left: 14px;
    top: 4px;
    width: 6px;
    height: 28px;
    background-color: #000;
}

.slide-mark::after {
    content: "";
    position: absolute;
    left: 0;
    top: 29px;
    width: 34px;
    height: 6px;
    background-color: #000;
}

.slide-number {
    margin-left: 1020px;
    font-size: 38px;
    line-height: 38px;
    color: #888;
}

/* Participants strip */
.participants {
    height: 142px;
    display: flex;
    flex-shrink: 0;
}

.people-row {
    width: 1410px;
    display: flex;
    align-items: center;
    gap: 64px;
    padding-left: 686px;
    background-color: #1a1a1a;
}

.tile {
    width: 270px;
    display: flex;
    align-items: center;
    justify-content: center;
    background-color: #363636;
}

.tile-1 { background-color: #333; }
.tile-2 { background-color: #383838; }
.tile-3 { background-color: #373737; }
.tile-4 { background-color: #303030; }
.tile-5 { background-color: #2e2e2e; }
.tile-7 { background-color: #363636; }
.tile-8 { background-color: #333; }
.tile-9 { background-color: #2f2f2f; }

.tile-speaking {
    background: radial-gradient(circle at center 35%, #5a597d 0%, #413f53 55%, #3d3c4c 100%);
}

.avatar {
    width: 66px;
    height: 66px;
    border-radius: 50%;
    display: flex;
    align-items: center;
    justify-content: center;
    font-size: 23px;
    flex-shrink: 0;
}

.avatar.small {
    width: 62px;
    height: 62px;
}

.a-nr { background-color: #d8e4e9; color: #2f4a55; }
.a-yn { background-color: #d6d5ea; color: #2a2a66; }
.a-mm { background-color: #d0ecdf; color: #1c5a3a; }
.a-iz { background-color: #ecd4e2; color: #5a1f48; }
.a-ns { background-color: #f3d5cb; color: #6b1f10; }
.a-ms { background-color: #e1dfee; color: #433d70; }
.a-sr { background-color: #dbe0d6; color: #3a4a25; }
.a-na { background-color: #c9d8e8; color: #12305e; }
.a-pt { background-color: #d7d3e8; color: #3c3468; }
.a-ni { background-color: #d5e5d8; color: #2c5a3a; }
.a-u { background-color: #dbd6ea; color: #3c3468; }
.a-ni2 { background-color: #f8ebcf; color: #6e4b05; }
.a-cc { background-color: #c8d7ea; color: #0f2c5e; }
.a-ss { background-color: #ccdaea; color: #12305e; }

.a-kt {
    background-color: #c9d8ea;
    color: #0d2a55;
    box-shadow: 0 0 0 4px #3a3a4e, 0 0 0 8px #9a9cf8, 0 6px 14px 8px rgba(0, 0, 0, 0.25);
}

/* Taskbar */
.taskbar {
    height: 60px;
    display: flex;
    align-items: center;
    background: linear-gradient(90deg, #171717 0%, #1a1f2a 30%, #1b1b1d 60%, #161616 100%);
    flex-shrink: 0;
}

.start {
    width: 73px;
    height: 60px;
    display: flex;
    align-items: center;
    padding-left: 23px;
}

.search {
    width: 515px;
    height: 60px;
    display: flex;
    align-items: center;
    gap: 16px;
    padding-left: 16px;
    background-color: #333;
    border: 2px solid #555;
    color: #ccc;
    font-size: 21.500px;
}

.task-item {
    position: relative;
    width: 75px;
    height: 60px;
    display: flex;
    align-items: center;
    justify-content: center;
}

.running::after {
    content: "";
    position: absolute;
    left: 8px;
    right: 7px;
    bottom: 0;
    height: 3px;
    background-color: #a9d0f5;
}

.netflix {
    width: 36px;
    height: 36px;
    background-color: #000;
    color: #e50914;
    font-size: 30px;
    font-weight: 700;
    line-height: 36px;
    text-align: center;
}

.teams {
    position: relative;
    width: 36px;
    height: 32px;
}

.teams-t {
    position: absolute;
    left: 0;
    bottom: 4px;
    width: 20px;
    height: 20px;
    background-color: #4b53bc;
    color: #fff;
    font-size: 15px;
    font-weight: 700;
    line-height: 20px;
    text-align: center;
}

.tray {
    margin-left: auto;
    display: flex;
    align-items: center;
    color: #e6e6e6;
    font-size: 21px;
}

.weather-temp {
    margin-left: 15px;
}

.weather-text {
    margin-left: 14px;
}

.tray-chevron {
    margin-left: 27px;
}

.tray-icon {
    margin-left: 17px;
}

.tray-battery {
    margin-left: 12px;
}

.tray-speaker {
    margin-left: 15px;
}

.clock {
    width: 94px;
    margin-left: 12px;
    display: flex;
    flex-direction: column;
    align-items: center;
    gap: 5px;
    font-size: 18px;
    line-height: 23px;
    white-space: nowrap;
}

.notify {
    position: relative;
    width: 62px;
    height: 60px;
    margin-left: 24px;
    padding-top: 18px;
    border-right: 2px solid #555;
}

.notify-count {
    position: absolute;
    left: 11px;
    top: 29px;
    width: 25px;
    height: 25px;
    border-radius: 50%;
    border: 1.500px solid #bbb;
    background-color: #333;
    color: #fff;
    font-size: 16px;
    line-height: 22px;
    text-align: center;
}
```
